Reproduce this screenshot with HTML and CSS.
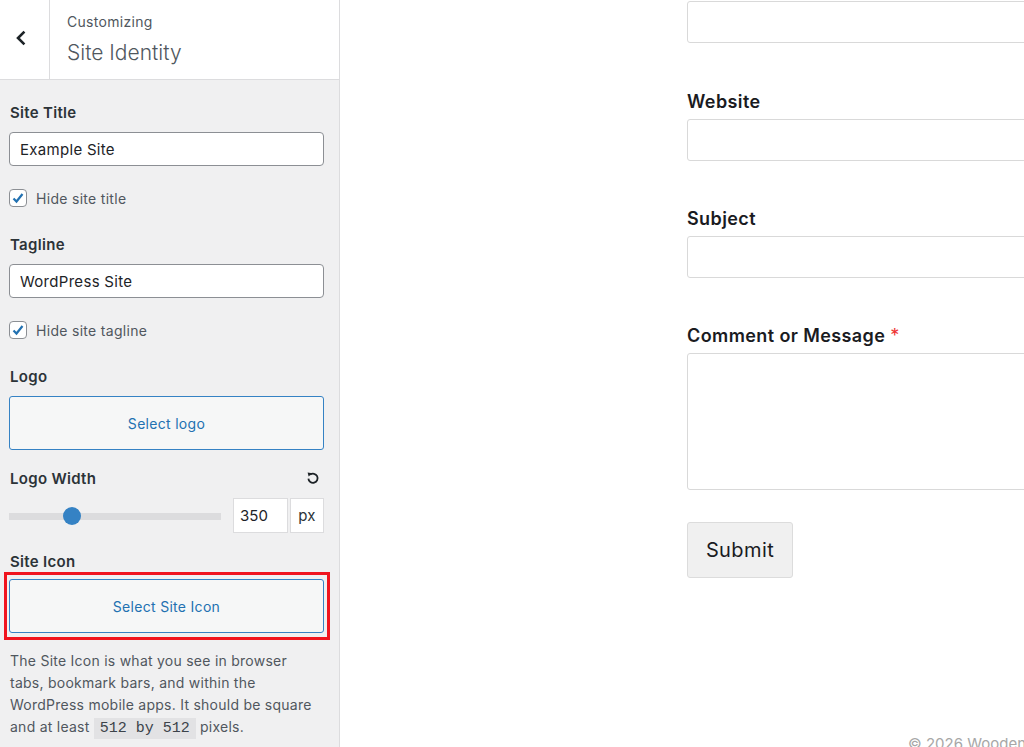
FILE: index.html
```html
<!DOCTYPE html>
<html>
<head>
   <title>Customize: Site Identity</title>
   <link rel="stylesheet" href="styles.css">
</head>
<body>
   <aside class="customizer">
       <header class="panel-head">
           <button class="back-btn" type="button" aria-label="Back">
               <svg width="12" height="16" viewBox="0 0 12 16"><polyline points="8.5,2.5 3,8 8.5,13.5" fill="none" stroke="#1d2327" stroke-width="2.6" stroke-linecap="square"/></svg>
           </button>
           <div class="panel-title">
               <span class="crumb">Customizing</span>
               <h2>Site Identity</h2>
           </div>
       </header>

       <div class="controls">
           <div class="control">
               <label class="control-label" for="blogname">Site Title</label>
               <input class="text-input" type="text" id="blogname" value="Example Site">
           </div>
           <label class="check-row">
               <span class="check">
                   <svg width="14" height="14" viewBox="0 0 14 14"><polyline points="2.5,7.5 5.5,10.5 11.5,3" fill="none" stroke="#2271b1" stroke-width="2.2"/></svg>
               </span>
               Hide site title
           </label>

           <div class="control">
               <label class="control-label" for="tagline">Tagline</label>
               <input class="text-input" type="text" id="tagline" value="WordPress Site">
           </div>
           <label class="check-row">
               <span class="check">
                   <svg width="14" height="14" viewBox="0 0 14 14"><polyline points="2.5,7.5 5.5,10.5 11.5,3" fill="none" stroke="#2271b1" stroke-width="2.2"/></svg>
               </span>
               Hide site tagline
           </label>

           <div class="control">
               <span class="control-label">Logo</span>
               <button class="media-btn" type="button">Select logo</button>
           </div>

           <div class="control width-control">
               <div class="label-row">
                   <span class="control-label">Logo Width</span>
                   <svg class="reset" width="14" height="14" viewBox="0 0 14 14">
                       <path d="M4.2 3.6 A4.6 4.6 0 1 1 2.4 7.6" fill="none" stroke="#1d2327" stroke-width="1.8"/>
                       <polygon points="1.6,1.6 6.4,2.2 2.6,5.6" fill="#1d2327"/>
                   </svg>
               </div>
               <div class="range-row">
                   <div class="range">
                       <div class="range-track"></div>
                       <div class="range-thumb" style="left: 54px"></div>
                   </div>
                   <input class="num-input" type="text" value="350">
                   <span class="unit">px</span>
               </div>
           </div>

           <div class="control icon-control">
               <span class="control-label">Site Icon</span>
               <div class="focus-ring">
                   <button class="media-btn" type="button">Select Site Icon</button>
               </div>
           </div>

           <p class="description">
               The Site Icon is what you see in browser tabs, bookmark bars, and within the WordPress mobile apps. It should be square and at least <code>512 by 512</code> pixels.
           </p>
       </div>
   </aside>

   <main class="preview">
       <form class="contact-form">
           <div class="field first">
               <input class="field-input" type="text">
           </div>
           <div class="field">
               <label>Website</label>
               <input class="field-input" type="text">
           </div>
           <div class="field">
               <label>Subject</label>
               <input class="field-input" type="text">
           </div>
           <div class="field last">
               <label>Comment or Message <span class="req">*</span></label>
               <textarea class="field-area"></textarea>
           </div>
           <button class="submit" type="button">Submit</button>
       </form>
       <footer class="site-footer">© 2026 Wooden Spoon</footer>
   </main>
</body>
</html>
```

FILE: styles.css
```css
html, body {
    margin: 0;
    height: 100%;
    overflow: hidden;
}
body {
    display: flex;
    font-family: Inter, "Noto Sans", Arial, sans-serif;
    background: #fff;
}

/* customizer sidebar */
.customizer {
    width: 339px;
    flex: none;
    background: #f0f0f1;
    border-right: 1px solid #dcdcde;
    height: 100%;
}
.panel-head {
    display: flex;
    height: 80px;
    background: #fff;
    border-bottom: 1px solid #dcdcde;
    box-sizing: border-box;
}
.back-btn {
    width: 50px;
    flex: none;
    border: none;
    border-right: 1px solid #dcdcde;
    background: #fff;
    padding: 0 8px 4px 0;
    display: flex;
    align-items: center;
    justify-content: center;
}
.panel-title {
    padding: 12px 0 0 17px;
    color: #50575e;
}
.crumb {
    display: block;
    font-size: 14px;
    line-height: 20px;
    letter-spacing: 0.3px;
}
.panel-title h2 {
    margin: 8px 0 0;
    font-size: 21px;
    font-weight: 300;
    line-height: 26px;
    color: #50575e;
}
.controls {
    padding: 23px 15px 0 9px;
    color: #1d2327;
    font-size: 14px;
    letter-spacing: 0.3px;
}
.control + .control,
.check-row + .control {
    margin-top: 27px;
}
.control-label {
    display: block;
    font-size: 15px;
    font-weight: 600;
    line-height: 20px;
    margin: 0 0 9px 1px;
    color: #2c3338;
}
.text-input {
    display: block;
    width: 100%;
    height: 34px;
    box-sizing: border-box;
    border: 1px solid #8c8f94;
    border-radius: 4px;
    padding: 0 10px;
    font-family: inherit;
    font-size: 15px;
    letter-spacing: 0.3px;
    color: #1d2327;
    background: #fff;
}
.check-row {
    display: flex;
    align-items: center;
    gap: 9px;
    margin-top: 22px;
    height: 20px;
    color: #50575e;
}
.check {
    width: 16px;
    height: 16px;
    border: 1px solid #8c8f94;
    border-radius: 4px;
    background: #fff;
    display: flex;
    align-items: center;
    justify-content: center;
}
.media-btn {
    display: block;
    width: 100%;
    height: 54px;
    border: 1px solid #3582c4;
    border-radius: 3px;
    background: #f6f7f7;
    color: #2271b1;
    font-family: inherit;
    font-size: 14px;
    letter-spacing: 0.3px;
}
.label-row {
    display: flex;
    justify-content: space-between;
    align-items: flex-start;
}
.reset {
    margin: 2px 4px 0 0;
}
.control.width-control {
    margin-top: 19px;
}
.control.icon-control {
    margin-top: 19px;
}
.range-row {
    display: flex;
    align-items: center;
}
.range {
    position: relative;
    width: 212px;
    height: 35px;
    margin-right: 12px;
}
.range-track {
    position: absolute;
    left: 0;
    right: 0;
    top: 15px;
    height: 7px;
    background: #dcdcde;
}
.range-thumb {
    position: absolute;
    top: 9px;
    width: 18px;
    height: 18px;
    border-radius: 50%;
    background: #3582c4;
}
.num-input {
    width: 55px;
    height: 35px;
    box-sizing: border-box;
    border: 1px solid #dcdcde;
    background: #fff;
    padding: 0 6px;
    font-family: inherit;
    font-size: 15px;
    color: #1d2327;
}
.unit {
    width: 34px;
    height: 35px;
    margin-left: 2px;
    box-sizing: border-box;
    border: 1px solid #dcdcde;
    background: #fff;
    display: flex;
    align-items: center;
    justify-content: center;
    font-size: 15px;
    color: #2c3338;
}
.icon-control .control-label {
    margin-bottom: 0;
}
.focus-ring {
    margin: 0 -6px 0 -5px;
    padding: 4px 3px 4px 2px;
    border: 3px solid #f0141e;
}
.description {
    margin: 10px 0 0 1px;
    line-height: 22px;
    letter-spacing: 0.25px;
    color: #50575e;
}
.description code {
    font-family: "Liberation Mono", "DejaVu Sans Mono", monospace;
    font-size: 15px;
    letter-spacing: 0;
    background: #e2e2e4;
    padding: 2px 6px;
    color: #3c434a;
}

/* site preview */
.preview {
    flex: 1;
    position: relative;
    padding-left: 347px;
    overflow: hidden;
}
.contact-form {
    width: 420px;
    margin-top: 1px;
}
.field {
    margin-bottom: 46px;
}
.field.first {
    margin-bottom: 47px;
}
.field.last {
    margin-bottom: 32px;
}
.field label {
    display: block;
    font-size: 18px;
    font-weight: 600;
    line-height: 24px;
    letter-spacing: 0.4px;
    color: #1a1b1f;
    margin-bottom: 5px;
}
.req {
    color: #e33;
    font-weight: 400;
}
.field-input {
    display: block;
    width: 100%;
    height: 42px;
    box-sizing: border-box;
    border: 1px solid #d9d9d9;
    border-radius: 3px;
    background: #fff;
}
.field-area {
    display: block;
    width: 100%;
    height: 137px;
    box-sizing: border-box;
    border: 1px solid #d9d9d9;
    border-radius: 3px;
    resize: none;
}
.submit {
    width: 106px;
    height: 56px;
    border: 1px solid #dcdcdc;
    border-radius: 3px;
    background: #f0f0f0;
    font-family: inherit;
    font-size: 20px;
    letter-spacing: 0.4px;
    color: #1a1b1f;
}
.site-footer {
    position: absolute;
    left: 568px;
    top: 734px;
    font-size: 15px;
    color: #a7a7a7;
    white-space: nowrap;
}
```
